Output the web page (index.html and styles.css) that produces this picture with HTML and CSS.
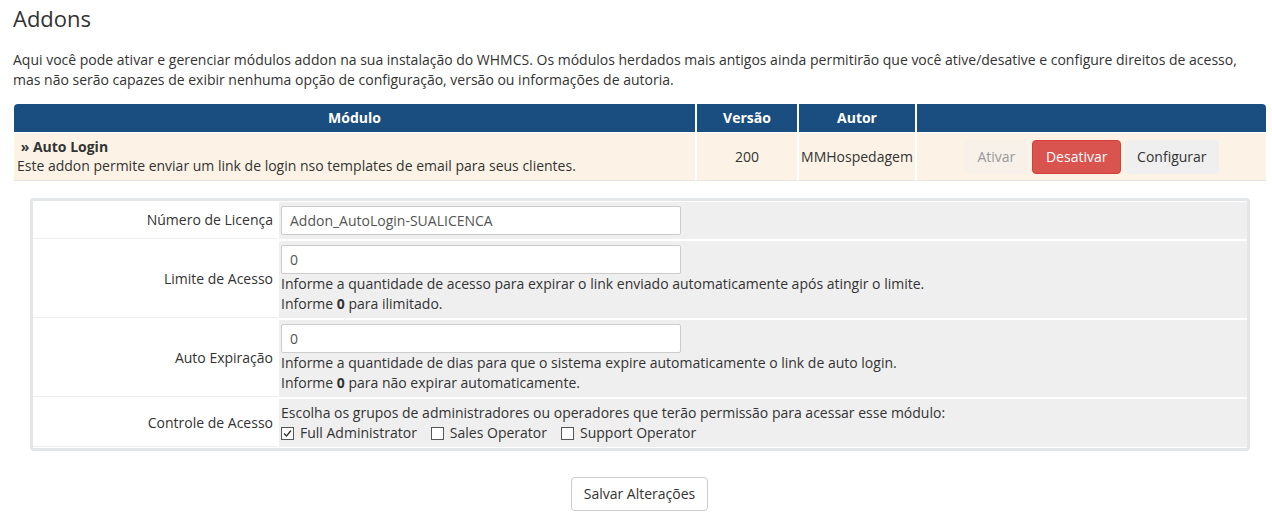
FILE: index.html
```html
<!DOCTYPE html>
<html lang="pt-BR">
<head>
    <meta charset="UTF-8">
    <title>Addons</title>
    <link rel="stylesheet" href="styles.css">
</head>
<body>
    <div class="page">
        <h1>Addons</h1>
        <p class="intro">Aqui você pode ativar e gerenciar módulos addon na sua instalação do WHMCS. Os módulos herdados mais antigos ainda permitirão que você ative/desative e configure direitos de acesso, mas não serão capazes de exibir nenhuma opção de configuração, versão ou informações de autoria.</p>

        <table class="addons">
            <thead>
                <tr>
                    <th class="col-mod">Módulo</th>
                    <th class="col-ver">Versão</th>
                    <th class="col-aut">Autor</th>
                    <th class="col-act"></th>
                </tr>
            </thead>
            <tbody>
                <tr>
                    <td class="mod">
                        <div class="mod-name">&nbsp;» Auto Login</div>
                        <div>Este addon permite enviar um link de login nso templates de email para seus clientes.</div>
                    </td>
                    <td class="center">200</td>
                    <td class="center">MMHospedagem</td>
                    <td class="actions">
                        <button class="btn btn-disabled" disabled>Ativar</button>
                        <button class="btn btn-danger">Desativar</button>
                        <button class="btn btn-light">Configurar</button>
                    </td>
                </tr>
            </tbody>
        </table>

        <div class="settings">
            <table class="form">
                <tr>
                    <td class="fieldlabel">Número de Licença</td>
                    <td class="fieldarea"><input type="text" class="input" value="Addon_AutoLogin-SUALICENCA"></td>
                </tr>
                <tr>
                    <td class="fieldlabel">Limite de Acesso</td>
                    <td class="fieldarea">
                        <input type="text" class="input" value="0">
                        <div class="help">Informe a quantidade de acesso para expirar o link enviado automaticamente após atingir o limite.</div>
                        <div class="help">Informe <b>0</b> para ilimitado.</div>
                    </td>
                </tr>
                <tr>
                    <td class="fieldlabel">Auto Expiração</td>
                    <td class="fieldarea">
                        <input type="text" class="input" value="0">
                        <div class="help">Informe a quantidade de dias para que o sistema expire automaticamente o link de auto login.</div>
                        <div class="help">Informe <b>0</b> para não expirar automaticamente.</div>
                    </td>
                </tr>
                <tr>
                    <td class="fieldlabel">Controle de Acesso</td>
                    <td class="fieldarea">
                        <div class="help">Escolha os grupos de administradores ou operadores que terão permissão para acessar esse módulo:</div>
                        <div class="checks">
                            <label><span class="box"><svg width="11" height="11" viewBox="0 0 11 11"><path d="M2 5.5 L4.5 8 L9 2.5" fill="none" stroke="#333" stroke-width="1.3"/></svg></span>Full Administrator</label>
                            <label><span class="box"></span>Sales Operator</label>
                            <label><span class="box"></span>Support Operator</label>
                        </div>
                    </td>
                </tr>
            </table>
        </div>

        <div class="save-row">
            <button class="btn btn-default">Salvar Alterações</button>
        </div>
    </div>
</body>
</html>
```

FILE: styles.css
```css
body {
    margin: 0;
    padding: 0;
    font-family: 'Open Sans', 'Noto Sans', sans-serif;
    font-size: 14px;
    line-height: 20px;
    color: #333;
    background: #fff;
}

.page {
    padding: 6px 6px 0 13px;
}

h1 {
    margin: 0;
    font-size: 22px;
    font-weight: 400;
    line-height: 24px;
}

.intro {
    margin: 20px 0 14px 0;
}

.addons {
    width: 1252px;
    margin-left: 1px;
    border-collapse: separate;
    border-spacing: 0;
}

.addons th {
    background: #1a4d80;
    color: #fff;
    font-weight: 700;
    height: 28px;
    padding: 0;
    border-left: 2px solid #fff;
    border-bottom: 1px solid #fff;
}

.addons th:first-child {
    border-left: none;
    border-top-left-radius: 4px;
}

.addons th:last-child {
    border-top-right-radius: 4px;
}

.col-mod { width: 681px; }
.col-ver { width: 100px; }
.col-aut { width: 116px; }

.addons td {
    background: #fcf3e6;
    height: 47px;
    padding: 0;
    border-left: 2px solid #fff;
    border-bottom: 1px solid #e6e6e6;
}

.addons td:first-child {
    border-left: none;
}

.mod {
    padding: 0 0 0 3px !important;
}

.mod-name {
    font-weight: 700;
    line-height: 19px;
}

.center {
    text-align: center;
}

.actions {
    text-align: center;
}

.btn {
    font-family: 'Open Sans', 'Noto Sans', sans-serif;
    font-size: 14px;
    line-height: 20px;
    padding: 6px 11px;
    border: 1px solid transparent;
    border-radius: 4px;
    cursor: pointer;
    margin: 0;
}

.actions .btn {
    vertical-align: middle;
}

.btn-disabled {
    background: #f7f1e9;
    color: #999;
    cursor: default;
    padding: 6px 12px;
}

.btn-danger {
    background: #d9534f;
    border-color: #d43f3a;
    color: #fff;
    padding: 6px 13px;
}

.btn-light {
    background: #efefef;
    color: #333;
}

.settings {
    margin: 17px 16px 0 17px;
    border: 3px solid #e3e6e8;
    border-radius: 4px;
}

.form {
    width: 100%;
    border-collapse: separate;
    border-spacing: 0 2px;
    margin: -1px 0;
}

.fieldlabel {
    width: 240px;
    text-align: right;
    padding: 0 4px 0 0;
    background: #fff;
    border-bottom: 1px solid #eee;
}

.fieldarea {
    background: #efefef;
    padding: 4px 2px 4px 2px;
    border-left: 2px solid #fff;
}

.input {
    display: block;
    width: 400px;
    height: 29px;
    box-sizing: border-box;
    padding: 3px 8px;
    font-family: 'Open Sans', 'Noto Sans', sans-serif;
    font-size: 14px;
    color: #555;
    border: 1px solid #ccc;
    border-radius: 2px;
    background: #fff;
}

.help b {
    font-weight: 700;
}

.checks {
    display: flex;
    gap: 14px;
    line-height: 20px;
}

.checks label {
    display: flex;
    align-items: center;
    gap: 6px;
}

.box {
    display: inline-flex;
    align-items: center;
    justify-content: center;
    width: 11px;
    height: 11px;
    border: 1px solid #555;
    background: #fff;
}

.save-row {
    text-align: center;
    margin-top: 26px;
}

.btn-default {
    background: #fff;
    border-color: #ccc;
    color: #333;
    padding: 6px 12px;
}
```
